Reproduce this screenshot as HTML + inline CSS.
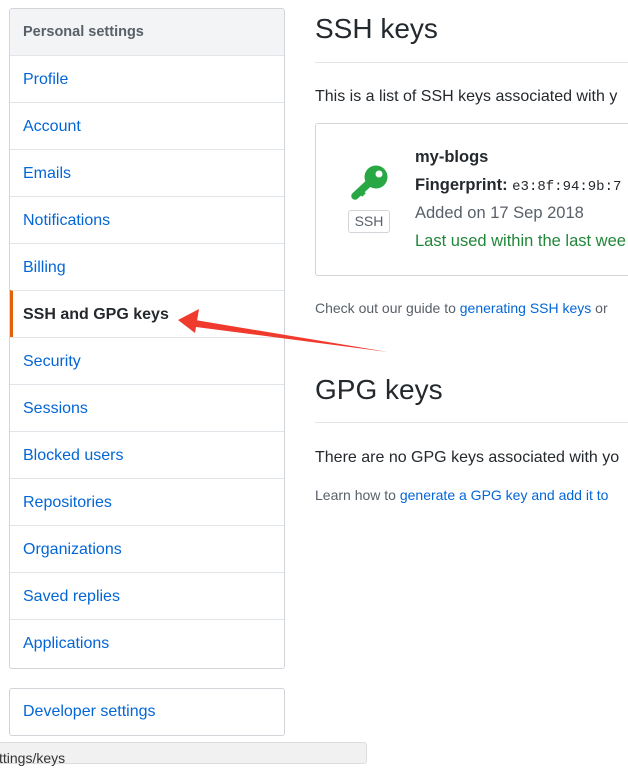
<!DOCTYPE html><html><head><style>
body{margin:0;width:628px;height:758px;overflow:hidden;background:#fff;font-family:"Liberation Sans",sans-serif;position:relative;color:#24292e}
.a{position:absolute;white-space:nowrap}
.side{position:absolute;left:9px;top:8px;width:274px;height:659px;border:1px solid #d1d5da;border-radius:3px;overflow:hidden}
.side div{height:47px;line-height:47px;border-top:1px solid #e1e4e8;box-sizing:border-box;padding-left:13px;font-size:16px;color:#0366d6}
.side div.h{background:#f3f4f6;color:#586069;font-weight:bold;font-size:14.5px;border-top:none;height:46px;line-height:46px}
.side div.s{color:#24292e;font-weight:bold;border-left:3px solid #e36209;padding-left:10px}
a{color:#0366d6;text-decoration:none}
</style></head><body>
<div class="side">
<div class="h">Personal settings</div>
<div>Profile</div><div>Account</div><div>Emails</div><div>Notifications</div><div>Billing</div><div class="s">SSH and GPG keys</div><div>Security</div><div>Sessions</div><div>Blocked users</div><div>Repositories</div><div>Organizations</div><div>Saved replies</div><div>Applications</div>
</div>
<div class="a" style="left:9px;top:688px;border:1px solid #d1d5da;border-radius:3px;line-height:46px;font-size:16px;color:#0366d6;box-sizing:border-box;padding-left:13px;width:276px;height:48px">Developer settings</div>
<div class="a" style="left:-2px;top:742px;width:367px;height:20px;background:#f1f1f1;border:1px solid #ddd;border-radius:3px;font-size:14px;line-height:30px;color:#333">ttings/keys</div>
<div class="a" style="left:315px;top:13px;font-size:28px">SSH keys</div>
<div class="a" style="left:315px;top:62px;width:313px;height:1px;background:#e1e4e8"></div>
<div class="a" style="left:315px;top:88px;font-size:16px">This is a list of SSH keys associated with y</div>
<div class="a" style="left:315px;top:123px;width:330px;height:151px;border:1px solid #d1d5da;border-radius:3px"></div>
<svg class="a" style="left:350px;top:165px" width="40" height="38" viewBox="0 0 40 38"><circle cx="26" cy="12" r="11.5" fill="#28a745"/><circle cx="29" cy="9" r="3.5" fill="#fff"/><path d="M19 18 L5 31" stroke="#28a745" stroke-width="7.5" stroke-linecap="round"/><path d="M10 26 L14 30" stroke="#28a745" stroke-width="5"/></svg>
<div class="a" style="left:348px;top:210px;width:40px;height:21px;border:1px solid #d1d5da;border-radius:3px;font-size:14px;line-height:21px;text-align:center;color:#586069">SSH</div>
<div class="a" style="left:415px;top:148px;font-size:16.5px;font-weight:bold">my-blogs</div>
<div class="a" style="left:415px;top:176px;font-size:16.5px;font-weight:bold">Fingerprint: <span style="font-family:'Liberation Mono',monospace;font-weight:normal;font-size:14px">e3:8f:94:9b:7</span></div>
<div class="a" style="left:415px;top:204px;font-size:16.5px;color:#586069">Added on 17 Sep 2018</div>
<div class="a" style="left:415px;top:232px;font-size:16.5px;color:#22863a">Last used within the last wee</div>
<div class="a" style="left:315px;top:300px;font-size:14px;color:#586069">Check out our guide to <a>generating SSH keys</a> or</div>
<div class="a" style="left:315px;top:374px;font-size:28px">GPG keys</div>
<div class="a" style="left:315px;top:422px;width:313px;height:1px;background:#e1e4e8"></div>
<div class="a" style="left:315px;top:449px;font-size:16px">There are no GPG keys associated with yo</div>
<div class="a" style="left:315px;top:487px;font-size:14px;color:#586069">Learn how to <a>generate a GPG key and add it to</a></div>
<svg class="a" style="left:0;top:0" width="628" height="758"><path d="M388 352 L195 320 L196 327 Z" fill="#f03a2e"/><path d="M178 320 L199 309 L195 333 Z" fill="#f03a2e"/></svg>
</body></html>
